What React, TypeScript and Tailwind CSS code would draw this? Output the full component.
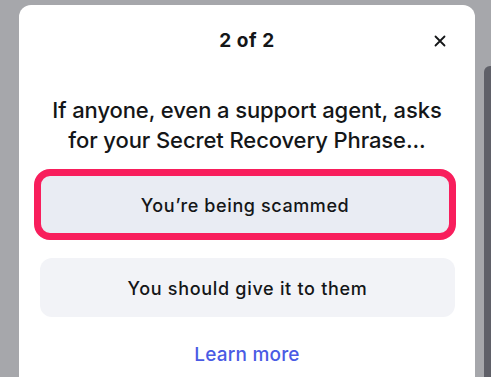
import React from 'react';

const App: React.FC = () => {
  return (
    <div
      className="relative w-[491px] h-[377px] overflow-hidden bg-[#a6a7ab]"
      style={{ fontFamily: 'Inter, "Noto Sans", sans-serif' }}
    >
      {/* dark element peeking from behind on the right */}
      <div className="absolute right-0 top-[66px] w-[7px] h-[320px] bg-[#5f6068] rounded-tl-[6px]" />

      {/* Modal */}
      <div className="ml-[19px] mt-[5px] w-[456px] h-[400px] bg-white rounded-[12px] flex flex-col">
        {/* Header */}
        <div className="relative h-[72px] flex items-center justify-center">
          <span className="text-[19px] font-bold text-[#141618] tracking-[0.6px]">2 of 2</span>
          <button className="absolute right-[28px] top-[29px] w-[14px] h-[14px] flex items-center justify-center text-[#141618]">
            <svg width="12" height="12" viewBox="0 0 12 12" fill="none">
              <path d="M1.5 1.5L10.5 10.5M10.5 1.5L1.5 10.5" stroke="currentColor" strokeWidth="1.8" strokeLinecap="round" />
            </svg>
          </button>
        </div>

        {/* Question */}
        <p className="mt-[18px] text-center text-[22px] leading-[30px] font-medium text-[#141618] tracking-[-0.1px]">
          If anyone, even a support agent, asks
          <br />
          for your Secret Recovery Phrase...
        </p>

        {/* Answers */}
        <div className="mt-[14px] flex flex-col items-start">
          <button className="ml-[15px] w-[422px] h-[71px] rounded-[16px] border-[7px] border-[#f81e5c] bg-[#e9ecf3] flex items-center justify-center pt-[2px] text-[18px] font-medium text-[#141618] tracking-[0.6px]">
            You’re being scammed
          </button>
          <button className="ml-[21px] mt-[18px] w-[415px] h-[59px] rounded-[12px] bg-[#f2f3f7] flex items-center justify-center pt-[2px] text-[18px] font-medium text-[#141618] tracking-[0.7px]">
            You should give it to them
          </button>
        </div>

        <div className="mt-[24px] flex justify-center">
          <a className="text-[19px] font-medium text-[#4a5be4] cursor-pointer tracking-[0.2px]">Learn more</a>
        </div>
      </div>
    </div>
  );
};

export default App;
